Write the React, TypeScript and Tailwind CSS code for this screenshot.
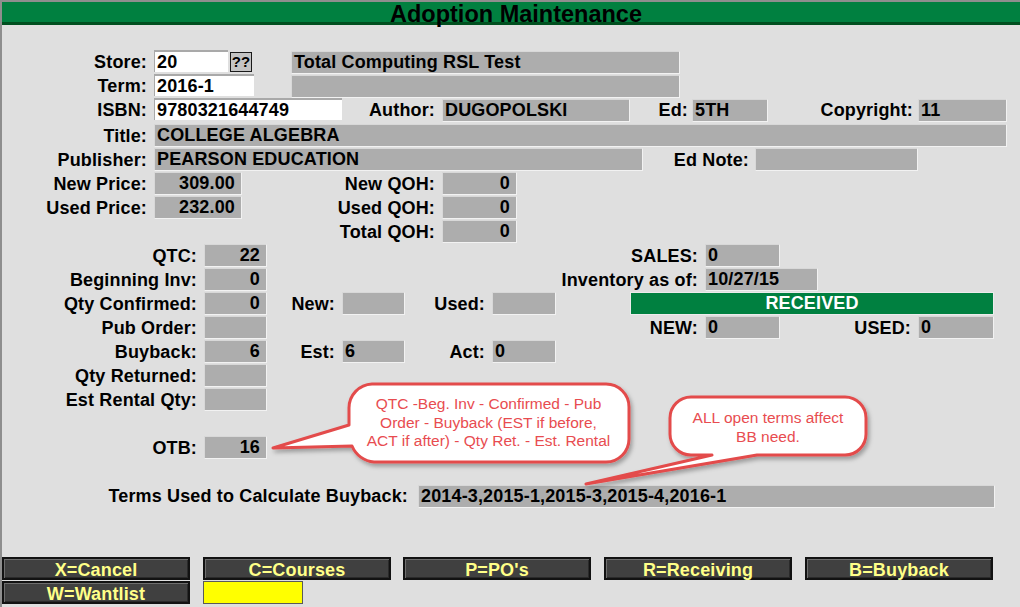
import React from "react";

const F = "[font-family:'Liberation_Sans',Arial,sans-serif]";

function Label({ className = "", children }: { className?: string; children?: React.ReactNode }) {
  return (
    <div className={`shrink-0 text-right whitespace-nowrap pt-[1px] leading-[22px] ${className}`}>{children}</div>
  );
}

function Gray({
  className = "",
  children,
  right = false,
}: {
  className?: string;
  children?: React.ReactNode;
  right?: boolean;
}) {
  return (
    <div
      className={`shrink-0 h-[23px] bg-[#adadad] border border-[#f2f2f2] border-t-[#d8d8d8] border-l-[#d8d8d8] leading-[21px] whitespace-nowrap overflow-hidden ${
        right ? "text-right pr-[6px]" : "pl-[2px]"
      } ${className}`}
    >
      {children}
    </div>
  );
}

function White({ className = "", children }: { className?: string; children?: React.ReactNode }) {
  return (
    <div
      className={`shrink-0 h-[22px] bg-white border-t-2 border-l border-[#a9a9a9] leading-[20px] pl-[2px] whitespace-nowrap ${className}`}
    >
      {children}
    </div>
  );
}

function Row({ className = "", children }: { className?: string; children?: React.ReactNode }) {
  return <div className={`flex items-start h-[24px] ${className}`}>{children}</div>;
}

function Btn({ className = "", children }: { className?: string; children?: React.ReactNode }) {
  return (
    <div
      className={`shrink-0 w-[188px] h-[23px] bg-[#404040] border-2 border-[#121212] shadow-[inset_1px_1px_0_#6e6e6e,inset_-1px_-1px_0_#2a2a2a] text-center text-[#ffff88] pt-[1px] leading-[20px] ${className}`}
    >
      {children}
    </div>
  );
}

export default function App() {
  return (
    <div
      className={`relative w-[1020px] h-[607px] overflow-hidden bg-[#dfdfdf] ${F} text-[18px] font-bold tracking-[0.15px] text-black`}
    >
      <div className="w-full h-full border-l-2 border-t-2 border-[#8e8e8e] flex flex-col">
        {/* title bar */}
        <div className="w-[1028px] shrink-0 h-[23px] bg-[#008040] border-b-[3px] border-[#004f1f] text-center text-[23.5px] tracking-normal leading-[24px] text-black">
          Adoption Maintenance
        </div>

        <div className="flex flex-col pt-[25px]">
          {/* Store */}
          <Row>
            <Label className="w-[145px]">Store:</Label>
            <White className="ml-[7px] w-[74px]">20</White>
            <div className="shrink-0 ml-[2px] mt-[2px] w-[22px] h-[20px] bg-[#c4c4c4] border border-[#1a1a1a] text-[15px] tracking-normal leading-[18px] text-center">
              ??
            </div>
            <Gray className="ml-[39px] mt-[1px] w-[389px]">Total Computing RSL Test</Gray>
          </Row>
          {/* Term */}
          <Row>
            <Label className="w-[145px]">Term:</Label>
            <White className="ml-[7px] w-[100px]">2016-1</White>
            <Gray className="ml-[37px] mt-[1px] w-[389px]" />
          </Row>
          {/* ISBN */}
          <Row className="h-[26px]">
            <Label className="w-[145px]">ISBN:</Label>
            <White className="ml-[7px] w-[188px]">9780321644749</White>
            <Label className="w-[93px]">Author:</Label>
            <Gray className="ml-[7px] mt-[1px] w-[188px]">DUGOPOLSKI</Gray>
            <Label className="w-[58px]">Ed:</Label>
            <Gray className="ml-[4px] mt-[1px] w-[76px]">5TH</Gray>
            <Label className="w-[145px]">Copyright:</Label>
            <Gray className="ml-[5px] mt-[1px] w-[89px]">11</Gray>
          </Row>
          {/* Title */}
          <Row>
            <Label className="w-[145px]">Title:</Label>
            <Gray className="ml-[7px] w-[853px]">COLLEGE ALGEBRA</Gray>
          </Row>
          {/* Publisher */}
          <Row>
            <Label className="w-[145px]">Publisher:</Label>
            <Gray className="ml-[7px] w-[489px]">PEARSON EDUCATION</Gray>
            <Label className="w-[106px]">Ed Note:</Label>
            <Gray className="ml-[6px] w-[163px]" />
          </Row>
          {/* New Price */}
          <Row>
            <Label className="w-[145px]">New Price:</Label>
            <Gray className="ml-[7px] w-[88px]" right>
              309.00
            </Gray>
            <Label className="w-[193px]">New QOH:</Label>
            <Gray className="ml-[7px] w-[75px]" right>
              0
            </Gray>
          </Row>
          {/* Used Price */}
          <Row>
            <Label className="w-[145px]">Used Price:</Label>
            <Gray className="ml-[7px] w-[88px]" right>
              232.00
            </Gray>
            <Label className="w-[193px]">Used QOH:</Label>
            <Gray className="ml-[7px] w-[75px]" right>
              0
            </Gray>
          </Row>
          {/* Total QOH */}
          <Row>
            <div className="shrink-0 w-[240px]" />
            <Label className="w-[193px]">Total QOH:</Label>
            <Gray className="ml-[7px] w-[75px]" right>
              0
            </Gray>
          </Row>
          {/* QTC */}
          <Row>
            <Label className="w-[195px]">QTC:</Label>
            <Gray className="ml-[7px] w-[63px]" right>
              22
            </Gray>
            <Label className="w-[431px]">SALES:</Label>
            <Gray className="ml-[7px] w-[75px]">0</Gray>
          </Row>
          {/* Beginning Inv */}
          <Row>
            <Label className="w-[195px]">Beginning Inv:</Label>
            <Gray className="ml-[7px] w-[63px]" right>
              0
            </Gray>
            <Label className="w-[431px]">Inventory as of:</Label>
            <Gray className="ml-[7px] w-[113px]">10/27/15</Gray>
          </Row>
          {/* Qty Confirmed */}
          <Row>
            <Label className="w-[195px]">Qty Confirmed:</Label>
            <Gray className="ml-[7px] w-[63px]" right>
              0
            </Gray>
            <Label className="w-[68px]">New:</Label>
            <Gray className="ml-[7px] w-[63px]" />
            <Label className="w-[80px]">Used:</Label>
            <Gray className="ml-[7px] w-[64px]" />
            <div className="shrink-0 ml-[74px] w-[364px] h-[23px] bg-[#008040] border border-[#ececec] text-white text-center leading-[21px]">
              RECEIVED
            </div>
          </Row>
          {/* Pub Order */}
          <Row>
            <Label className="w-[195px]">Pub Order:</Label>
            <Gray className="ml-[7px] w-[63px]" right />
            <Label className="w-[431px]">NEW:</Label>
            <Gray className="ml-[7px] w-[75px]">0</Gray>
            <Label className="w-[131px]">USED:</Label>
            <Gray className="ml-[7px] w-[76px]">0</Gray>
          </Row>
          {/* Buyback */}
          <Row>
            <Label className="w-[195px]">Buyback:</Label>
            <Gray className="ml-[7px] w-[63px]" right>
              6
            </Gray>
            <Label className="w-[68px]">Est:</Label>
            <Gray className="ml-[7px] w-[63px]">6</Gray>
            <Label className="w-[80px]">Act:</Label>
            <Gray className="ml-[7px] w-[64px]">0</Gray>
          </Row>
          {/* Qty Returned */}
          <Row>
            <Label className="w-[195px]">Qty Returned:</Label>
            <Gray className="ml-[7px] w-[63px]" right />
          </Row>
          {/* Est Rental Qty */}
          <Row>
            <Label className="w-[195px]">Est Rental Qty:</Label>
            <Gray className="ml-[7px] w-[63px]" right />
          </Row>
          <Row />
          {/* OTB */}
          <Row>
            <Label className="w-[195px]">OTB:</Label>
            <Gray className="ml-[7px] w-[63px]" right>
              16
            </Gray>
          </Row>
          <Row />
          {/* Terms */}
          <Row>
            <Label className="w-[406px]">Terms Used to Calculate Buyback:</Label>
            <Gray className="ml-[10px] mt-[1px] w-[577px]">2014-3,2015-1,2015-3,2015-4,2016-1</Gray>
          </Row>

          {/* Buttons */}
          <div className="flex mt-[49px]">
            <Btn>X=Cancel</Btn>
            <Btn className="ml-[13px]">C=Courses</Btn>
            <Btn className="ml-[12px]">P=PO&apos;s</Btn>
            <Btn className="ml-[13px]">R=Receiving</Btn>
            <Btn className="ml-[13px]">B=Buyback</Btn>
          </div>
          <div className="flex mt-[1px]">
            <Btn>W=Wantlist</Btn>
            <div className="shrink-0 ml-[13px] w-[100px] h-[23px] bg-[#ffff00] border border-[#5a5a5a]" />
          </div>
        </div>
      </div>

      {/* callouts overlay */}
      <svg
        className="absolute left-0 top-0 pointer-events-none"
        width="1020"
        height="607"
        viewBox="0 0 1020 607"
      >
        <defs>
          <filter id="sh" x="-10%" y="-10%" width="130%" height="140%">
            <feDropShadow dx="2" dy="3" stdDeviation="2" floodColor="#000" floodOpacity="0.3" />
          </filter>
        </defs>
        <path
          d="M372 384 H606 A23 23 0 0 1 629 407 V439 A23 23 0 0 1 606 462 H374 A26 26 0 0 1 352 446 L273 448 L349 425 V408 A24 24 0 0 1 372 384 Z"
          fill="#ffffff"
          stroke="#e34b4b"
          strokeWidth="3"
          strokeLinejoin="round"
          filter="url(#sh)"
        />
        <path
          d="M691 397 H845 A21 21 0 0 1 866 418 V434 A21 21 0 0 1 845 455 H757 L586 484 L712 455 H691 A21 21 0 0 1 670 434 V418 A21 21 0 0 1 691 397 Z"
          fill="#ffffff"
          stroke="#e34b4b"
          strokeWidth="3"
          strokeLinejoin="round"
          filter="url(#sh)"
        />
      </svg>
      <div className="absolute left-[348px] top-[395px] w-[281px] text-center text-[15.5px] tracking-normal leading-[18.5px] font-normal text-[#e84c50]">
        QTC -Beg. Inv - Confirmed - Pub
        <br />
        Order - Buyback (EST if before,
        <br />
        ACT if after) - Qty Ret. - Est. Rental
      </div>
      <div className="absolute left-[670px] top-[408px] w-[196px] text-center text-[15.5px] tracking-normal leading-[19px] font-normal text-[#e84c50]">
        ALL open terms affect
        <br />
        BB need.
      </div>
    </div>
  );
}
